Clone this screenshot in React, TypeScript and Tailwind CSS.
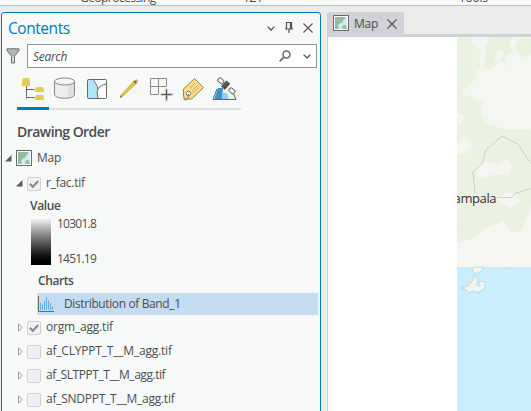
import type { ReactNode } from "react";

function MapIcon() {
  return (
    <svg width="16" height="16" viewBox="0 0 16 16" className="block shrink-0">
      <rect x=".5" y=".5" width="15" height="15" fill="#fff" stroke="#686868" />
      <path d="M2 2h12v12H2z" fill="#d3e9f7" />
      <path d="M2 2h10v2l-2 1v2L8 8 6 9l-1 2 1 2-1 1H2z" fill="#92bd98" />
      <path d="M9 11h1v-1h3v2h1v2H9z" fill="#9cc5a1" />
    </svg>
  );
}

function Check({ on }: { on?: boolean }) {
  return (
    <span className="block h-[14px] w-[14px] shrink-0 rounded-[2px] border border-[#d0d0d4] bg-[#f0f0f2]">
      {on && (
        <svg width="12" height="12" viewBox="0 0 12 12" className="block">
          <path d="M1.800 5.800l3 3L10.200 3" fill="none" stroke="#88888a" strokeWidth="2" />
        </svg>
      )}
    </span>
  );
}

function Arrow({ open }: { open?: boolean }) {
  return (
    <svg width="7" height="9" viewBox="0 0 7 9" className="block shrink-0">
      {open ? (
        <path d="M6.500 1v6.500H0z" fill="#5a5a5a" />
      ) : (
        <path d="M2.500.8v7.400L6 4.500z" fill="#fff" stroke="#9b9b9b" />
      )}
    </svg>
  );
}

function Close({ className }: { className?: string }) {
  return (
    <svg width="10" height="10" viewBox="0 0 10 10" className={className}>
      <path d="M.5.5l9 9m0-9l-9 9" stroke="#585858" strokeWidth="1.200" />
    </svg>
  );
}

function Chevron({ className }: { className?: string }) {
  return (
    <svg width="8" height="5" viewBox="0 0 8 5" className={className}>
      <path d="M.6.6L4 4 7.400.6" fill="none" stroke="#505050" strokeWidth="1.300" />
    </svg>
  );
}

function Layer({ name, checked, open, spacing }: { name: string; checked?: boolean; open?: boolean; spacing: string }) {
  return (
    <div className="flex h-6 items-center pl-[14px]">
      <Arrow open={open} />
      <span className="ml-1 mt-[2px]"><Check on={checked} /></span>
      <span className={`ml-[5px] whitespace-nowrap ${spacing}`}>{name}</span>
    </div>
  );
}

function Toolbar() {
  return (
    <svg width="224" height="36" viewBox="0 0 224 36" className="ml-[15px] block">
      <path d="M0 34h224" stroke="#dfe1e1" strokeWidth="2" />
      <path d="M0 33.500h32" stroke="#0079c1" strokeWidth="3" />
      <path d="M6 3h6l1 4v1H5V7zM5 8h8v3H5zM19 12h7l1 3v2h-9v-2zM19 20h7l1 3v2h-9v-2z" fill="#e3cd4d" />
      <path d="M9.500 11v12.500M9 14.500h8.500M9 22.500h8.500" fill="none" stroke="#686868" />
      <path d="M37.500 6.500v13c0 5 20 5 20 0v-13z" fill="#eeeeef" stroke="#858585" />
      <path d="M51 9l6-1v12l-6 2z" fill="#dedede" />
      <ellipse cx="47.500" cy="6.500" rx="10" ry="3.500" fill="#f5f5f5" stroke="#858585" />
      <rect x="70.500" y="4.500" width="19" height="19" rx="1" fill="#fff" stroke="#686868" />
      <path d="M71 5h5l5 9-1 3 1 6H71z" fill="#aee5fa" />
      <path d="M76 4l4 7 1 3-1 3 1 6M81 14c1-3 5-4 8-5" fill="none" stroke="#686868" />
      <path d="M104 20L117 6l2.500 2.300L106 21l-3 1.700z" fill="#e1c73a" stroke="#c0a329" strokeWidth=".7" />
      <path d="M117 6l2.500-2 2 2-2 2.300z" fill="#de9c91" />
      <path d="M117 6l2.300 2.200" stroke="#5b5b5b" strokeWidth="1.500" />
      <path d="M103 22.500l1-2 1 1z" fill="#555" />
      <path d="M133.500 3.500h16v8h-16zM133.500 11.500h8v8h-8zM141.500 3.500v8" fill="none" stroke="#8a8a8a" />
      <path d="M149.500 13.500v12.500M143.500 19.500h12.500" stroke="#a9dcf3" strokeWidth="3" />
      <path d="M149.500 14.500v10M144.500 19.500h10" stroke="#505050" />
      <path d="M177.500 3.500l9 9-12 11.500h-7l-1-3v-7z" fill="#f4dc8b" stroke="#aa7b44" />
      <circle cx="171.500" cy="18.500" r="2.200" fill="#fff" stroke="#9a7445" />
      <path d="M171.500 19c0 5-2 7-5 5" fill="none" stroke="#777" />
      <path d="M173 13l5-5m-3 8l6-6m-5 8l6-6" stroke="#c4a65a" strokeWidth=".8" />
      <path d="M201 13h14l4 12h-22z" fill="#e5f4e8" />
      <path d="M201 13h5l-1 12h-8z" fill="#3e94cd" />
      <path d="M205 18h5l2 7h-7z" fill="#90ceef" />
      <path d="M200 14l-4 10.500h23l-3-7" fill="none" stroke="#666" />
      <g transform="translate(209 10.500) rotate(42)">
        <path d="M-6 0h-4M5 0h5" stroke="#555" />
        <rect x="-10" y="-2" width="6" height="4" rx="1" fill="#fff" stroke="#666" />
        <rect x="5" y="-2" width="6" height="4" rx="1" fill="#fff" stroke="#666" />
        <path d="M-3-4h5v8h-5z" fill="#484848" />
        <path d="M-1-4v8" stroke="#999" strokeWidth=".6" />
      </g>
    </svg>
  );
}

function Terrain() {
  return (
    <svg width="74" height="374" viewBox="0 0 74 374" className="block">
      <defs>
        <filter id="relief" x="0" y="0" width="1" height="1">
          <feTurbulence type="fractalNoise" baseFrequency=".09" numOctaves="3" seed="12" />
          <feColorMatrix values="0 0 0 0 .86  0 0 0 0 .92  0 0 0 0 .80  2.4 0 0 0 -1" />
        </filter>
      </defs>
      <path d="M0 0h74v231H0z" fill="#f5f6f1" />
      <path d="M0 0h13l4 10 7 3-2 11 2 8-7 2 2 8-12 11-2 6h11l1 4h9l-2 13 4 10 20 6h34v42l-18 18-20 5-14 15-30 4z" fill="#eaf2e0" />
      <path d="M33 0h22l-3 8 4 7-7 3-1 7-5-1 4-7-2-4-6 2-1 13-5 5-7-4 3-10-1-9zM61 2h13v14l-5 5-7-4-4-7z" fill="#e8f1dd" />
      <path d="M0 154l20-7 16-10 10-31 28-10v71l-9 26-10 3-8-12-17 6-15 12-15 3z" fill="#eaf1e1" />
      <path d="M0 0h74v214H0z" filter="url(#relief)" opacity=".32" />
      <path d="M0 75l9 4-5 7H0zM0 108l6-8 7 3 2 8-7 5-8 1zM22 127l8-2 12 2 8-5 5 6-3 9-16 1-10 4-8-4zM40 162l11-7 8 3 4 6-9 7-10-4z" fill="#f5f6f2" />
      <path d="M0 212c12-8 20-6 25-15l9 13 12-4 4 12 24-3v16H0z" fill="#f5f5f1" />
      <path d="M18 156l-2-21 9-8 4-14 16-14 16 8 13 20M40 160.500h15l3-4 16-5" fill="none" stroke="#c6c3c9" strokeWidth=".8" />
      <path d="M0 230.500h74V374H0z" fill="#caedff" />
      <path d="M0 231h48m4 0h22" stroke="#b8e1ef" strokeWidth=".7" />
      <path d="M17 230h9l-1 4-6 3-4-3zM4 251l7-2 5-6 1-6 4 6-2 5 4 1-1-5 6 1v6l-7 5-5-2-4 2-4-4zM47 230l3 2 2-2" fill="#f4f3ec" stroke="#abd7e5" strokeWidth=".8" />
    </svg>
  );
}

function TreeLabel({ children, className }: { children: ReactNode; className: string }) {
  return <div className={`whitespace-nowrap ${className}`}>{children}</div>;
}

export default function App() {
  return (
    <main className="flex h-[411px] w-[531px] flex-col overflow-hidden bg-[#ebebeb] text-[12px] text-[#4c4c4c] [font-family:'Open_Sans','Noto_Sans',sans-serif]">
      <header className="relative h-[6px] shrink-0 overflow-hidden border-b border-[#bfbfbf] bg-[#f7f9f8] leading-[16px]">
        <span className="absolute left-[80px] top-[-10px] tracking-[-0.55px]">Geoprocessing</span>
        <span className="absolute left-[243px] top-[-10px] tracking-[-0.4px]">1Z1</span>
        <span className="absolute left-[459px] top-[-10px] tracking-[-0.2px]">Tools</span>
      </header>
      <div className="flex min-h-0 flex-1 pl-px pt-[6px]">
        <aside className="h-[405px] w-[320px] shrink-0 rounded-[3px] border border-[#0079c1] bg-[#f7f9f8]">
          <div className="flex h-[31px] items-center pl-[6px]">
            <h1 className="mt-[-1px] w-[232px] text-[15.5px] leading-[20px] tracking-[-0.45px] text-[#0079c1]">Contents</h1>
            <Chevron className="ml-[27px] mt-[-1px]" />
            <svg width="8" height="11" viewBox="0 0 8 11" className="ml-[10px] mt-[-2px]">
              <path d="M1.500 7V.5h5V7M0 7h8M4 7v4M5.500 1v6" fill="none" stroke="#505050" strokeWidth="1.200" />
            </svg>
            <Close className="ml-[10px] mt-[-2px]" />
          </div>
          <div className="flex h-6 pl-1">
            <svg width="14" height="18" viewBox="0 0 14 18" className="mt-1">
              <path d="M1 .8h12v2L8.500 8v7h-3V8L1 2.800z" fill="#b5b5b5" stroke="#737373" />
              <path d="M7 8v6" stroke="#fff" />
            </svg>
            <div className="ml-[7px] flex h-6 w-[290px] items-center border border-[#939393] bg-white pl-[5px]">
              <span className="mt-px w-24 italic tracking-[-0.3px]">Search</span>
              <svg width="12" height="12" viewBox="0 0 12 12" className="ml-[150px]">
                <circle cx="7.500" cy="4.500" r="3.500" fill="none" stroke="#686868" strokeWidth="1.500" />
                <path d="M4.800 7.200L.7 11.300" stroke="#686868" strokeWidth="1.800" />
              </svg>
              <Chevron className="ml-[12px]" />
            </div>
          </div>
          <div className="pt-[7px]"><Toolbar /></div>
          <h2 className="mt-[11px] pl-[15px] text-[14px] font-semibold leading-[20px] tracking-[-0.55px]">Drawing Order</h2>
          <div className="mb-px mt-1 flex h-6 items-center pl-[3px]">
            <Arrow open />
            <span className="ml-1"><MapIcon /></span>
            <span className="ml-[5px] tracking-[-0.2px]">Map</span>
          </div>
          <Layer name="r_fac.tif" open checked spacing="tracking-[-0.25px]" />
          <TreeLabel className="pl-7 font-semibold leading-[22px] tracking-[-0.35px]">Value</TreeLabel>
          <div className="flex h-12 pl-[29px]">
            <div className="h-12 w-5 bg-linear-to-b from-white to-black" />
            <div className="ml-[6px] flex flex-col justify-between leading-[13px] tracking-[-0.75px]">
              <span>10301.8</span><span>1451.19</span>
            </div>
          </div>
          <TreeLabel className="mt-[5px] h-[23px] pl-9 font-semibold leading-[22px] tracking-[-0.4px]">Charts</TreeLabel>
          <div className="ml-[35px] flex h-[22px] w-[281px] items-center bg-[#c5dbef]">
            <svg width="17" height="16" viewBox="0 0 17 16" className="ml-px">
              <path d="M.5 0v15.500H16" fill="none" stroke="#686868" />
              <path d="M2.500 7v7M4.500 9v5M6.500 5v9M8.500 1v13M10.500 4v10M12.500 7v7M14.500 10v4" stroke="#62addb" />
            </svg>
            <span className="ml-[9px] whitespace-nowrap tracking-[-0.38px]">Distribution of Band_1</span>
          </div>
          <Layer name="orgm_agg.tif" checked spacing="tracking-[-0.2px]" />
          <Layer name="af_CLYPPT_T__M_agg.tif" spacing="tracking-[-0.2px]" />
          <Layer name="af_SLTPPT_T__M_agg.tif" spacing="tracking-[-0.45px]" />
          <Layer name="af_SNDPPT_T__M_agg.tif" spacing="tracking-[-0.25px]" />
        </aside>
        <section className="ml-[6px] flex min-w-0 flex-1 flex-col">
          <div className="flex h-[22px] w-[77px] shrink-0 items-center rounded-t-[3px] bg-[#d1d2d7] pl-[6px]">
            <MapIcon />
            <span className="ml-[5px] mt-px w-[27px] tracking-[-0.2px]">Map</span>
            <Close className="ml-[6px] mt-px" />
          </div>
          <div className="flex min-h-0 flex-1 border-l border-t-[3px] border-[#d1d2d7] bg-white">
            <div className="relative ml-[129px] w-[74px] overflow-hidden">
              <Terrain />
              <span className="absolute left-[-11px] top-[152px] text-[13px] font-medium leading-[18px] tracking-[-0.4px] text-[#333]">Kampala</span>
            </div>
          </div>
        </section>
      </div>
    </main>
  );
}
